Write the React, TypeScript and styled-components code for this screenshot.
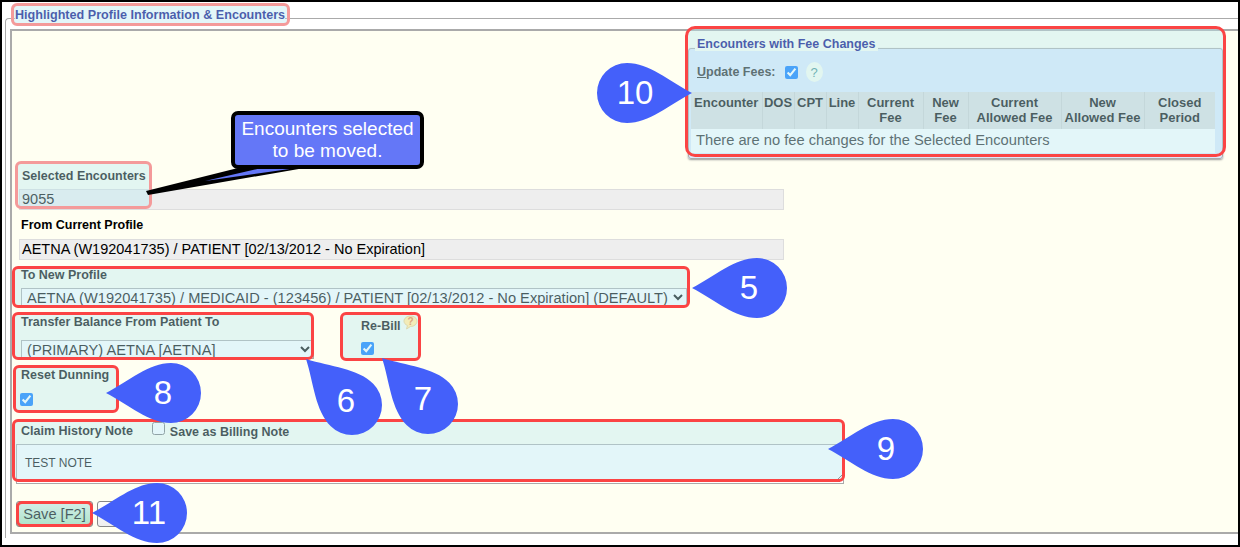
import styled, { createGlobalStyle } from "styled-components";

const GlobalStyle = createGlobalStyle`
  html, body {
    margin: 0;
    background: #fff;
    font-family: "Liberation Sans", Arial, sans-serif;
  }
`;

const Page = styled.div`
  position: relative;
  width: 1240px;
  height: 547px;
  overflow: hidden;
`;

const Frame = styled.div`
  box-sizing: border-box;
  width: 1240px;
  height: 547px;
  border: 2px solid #000;
  padding: 6px 0 0 3px;
`;

const Outer = styled.fieldset`
  box-sizing: border-box;
  height: 530px;
  min-width: 0;
  margin: 0;
  padding: 0 0 0 4px;
  border: solid #aaa;
  border-width: 1px 0 0 1px;
  border-top-left-radius: 4px;
`;

const OuterLegend = styled.legend`
  position: relative;
  margin-left: 5px;
  padding: 0 0 6px;
  font-size: 12.6px;
  font-weight: bold;
  line-height: 14px;
  color: #000080;
`;

const Panel = styled.div`
  box-sizing: border-box;
  height: 505px;
  margin-top: 1px;
  border: 2px solid #aaa;
  border-right: 0;
  background: #fffff2;
`;

const FeeRow = styled.div`
  display: flex;
  justify-content: flex-end;
  padding: 6px 15px 0 0;
`;

const FeeWrap = styled.div`
  position: relative;
  width: 535px;
`;

const FeeBox = styled.fieldset`
  box-sizing: border-box;
  min-width: 0;
  margin: 0;
  padding: 0 2px 5px;
  border: 1px solid #aaa;
  border-radius: 3px;
  background: #dee9fc;
  box-shadow: 0 1px 2px #999;
`;

const FeeLegend = styled.legend`
  margin-left: 4px;
  padding: 0 2px 8px;
  font-size: 12.5px;
  font-weight: bold;
  line-height: 14px;
  color: #000080;
  background: linear-gradient(#fffff2 65%, transparent 65%);
`;

const UpdateRow = styled.div`
  display: flex;
  align-items: center;
  height: 20px;
  margin: 3px 0 10px 6px;
  font-size: 12.5px;
  font-weight: bold;
  color: #222;
  u {
    text-decoration: underline;
  }
`;

const HelpDot = styled.span`
  display: flex;
  align-items: center;
  justify-content: center;
  width: 17px;
  height: 20px;
  margin-left: 8px;
  border-radius: 50%;
  background: #fdfff0;
  font-size: 13px;
  font-weight: normal;
  color: #3f8f8f;
`;

const FeeTable = styled.table`
  width: 524px;
  table-layout: fixed;
  border-collapse: collapse;
`;

const HeadCell = styled.th<{ $w: number }>`
  box-sizing: border-box;
  width: ${(p) => p.$w}px;
  height: 37px;
  padding: 3px 0 0;
  border-right: 1px solid #ccc;
  background: #ddd;
  font-size: 13px;
  line-height: 15px;
  color: #000;
  vertical-align: top;
  white-space: nowrap;
  &:last-child {
    border-right: 0;
  }
`;

const EmptyCell = styled.td`
  box-sizing: border-box;
  height: 24px;
  padding: 0 0 2px 5px;
  background: #fff;
  font-size: 14.7px;
  color: #222;
`;

const Form = styled.div`
  display: flex;
  flex-direction: column;
  padding-left: 7px;
`;

const Field = styled.div<{ $top: number; $left?: number }>`
  position: relative;
  margin-top: ${(p) => p.$top}px;
  margin-left: ${(p) => p.$left ?? 0}px;
`;

const Label = styled.label<{ $gap: number; $indent?: number }>`
  display: block;
  height: 14px;
  margin-bottom: ${(p) => p.$gap}px;
  padding-left: ${(p) => p.$indent ?? 2}px;
  font-size: 12.5px;
  font-weight: bold;
  line-height: 16px;
  color: #000;
  white-space: nowrap;
`;

const ReadBox = styled.div`
  box-sizing: border-box;
  width: 765px;
  height: 21px;
  padding-left: 2px;
  border: 1px solid #ddd;
  background: #eee;
  font-size: 14.5px;
  line-height: 19px;
  color: #000;
`;

const Select = styled.select<{ $w: number }>`
  display: block;
  box-sizing: border-box;
  width: ${(p) => p.$w}px;
  height: 19px;
  margin: 0 0 0 2px;
  padding: 0 0 0 1px;
  border: 1px solid #aaa;
  border-radius: 0;
  background: #fff;
  font-family: "Liberation Sans", Arial, sans-serif;
  font-size: 14.65px;
  color: #000;
`;

const Row = styled.div`
  display: flex;
  align-items: flex-start;
`;

const Check = styled.input<{ $left?: number }>`
  display: block;
  width: 13px;
  height: 13px;
  margin: 0 0 0 ${(p) => p.$left ?? 0}px;
`;

const BillingLabel = styled.span`
  display: inline-flex;
  margin-left: 19px;
  gap: 5px;
`;

const BillingCheck = styled(Check)`
  margin-top: -2px;
`;

const NoteArea = styled.textarea`
  display: block;
  box-sizing: border-box;
  width: 828px;
  height: 40px;
  margin-left: -3px;
  padding: 11px 8px 0;
  border: 1px solid #aaa;
  background: #fff;
  font-family: "Liberation Sans", Arial, sans-serif;
  font-size: 12px;
  color: #000;
  outline: none;
`;

const ButtonRow = styled(Field)`
  display: flex;
  gap: 4px;
  margin-left: -3px;
`;

const SaveButton = styled.button`
  box-sizing: border-box;
  width: 77px;
  height: 26px;
  padding: 0;
  border: 1px solid #888;
  border-radius: 3px;
  background: linear-gradient(#e6f2e6, #a6e0ae);
  font-family: "Liberation Sans", Arial, sans-serif;
  font-size: 14.6px;
  color: #000;
`;

const CancelButton = styled.button`
  box-sizing: border-box;
  width: 60px;
  height: 26px;
  border: 1px solid #888;
  border-radius: 3px;
  background: linear-gradient(#fff, #eee);
`;

// translucent highlight the screenshot author dropped over each field
const Mark = styled.div<{ $l: number; $t: number; $w: number; $h: number; $soft?: boolean; $r?: number }>`
  position: absolute;
  left: ${(p) => p.$l}px;
  top: ${(p) => p.$t}px;
  box-sizing: border-box;
  width: ${(p) => p.$w}px;
  height: ${(p) => p.$h}px;
  border: 3px solid ${(p) => (p.$soft ? "#f49a9a" : "#fb4444")};
  border-radius: ${(p) => p.$r ?? 6}px;
  background: rgba(185, 232, 240, 0.4);
  pointer-events: none;
`;

const Callout = styled.div`
  position: absolute;
  left: 231px;
  top: 111px;
  box-sizing: border-box;
  width: 193px;
  height: 58px;
  padding-top: 3px;
  border: 4px solid #000;
  border-radius: 7px;
  background: #6477f7;
  font-size: 19px;
  line-height: 22px;
  text-align: center;
  white-space: nowrap;
  color: #fff;
`;

const CalloutTail = styled.svg`
  position: absolute;
  left: 140px;
  top: 160px;
`;

const Pin = styled.div<{ $x: number; $y: number }>`
  position: absolute;
  left: ${(p) => p.$x - 70}px;
  top: ${(p) => p.$y - 70}px;
  width: 140px;
  height: 140px;
`;

const PinNumber = styled.span<{ $dx: number; $dy: number }>`
  position: absolute;
  inset: 0;
  display: flex;
  align-items: center;
  justify-content: center;
  transform: translate(${(p) => p.$dx}px, ${(p) => p.$dy}px);
  font-size: 33px;
  color: #fff;
`;

const BubbleIcon = styled.svg`
  position: absolute;
  left: 42px;
  top: -3px;
`;

function Teardrop({ x, y, angle, n, dx, dy }: { x: number; y: number; angle: number; n: number; dx: number; dy: number }) {
  return (
    <Pin $x={x} $y={y}>
      <svg width="140" height="140" viewBox="-70 -70 140 140">
        <path
          transform={`rotate(${angle})`}
          d="M-65 0C-42 -12 -22 -30 0 -30A30 30 0 0 1 0 30C-22 30 -42 12 -65 0Z"
          fill="#4460fa"
        />
      </svg>
      <PinNumber $dx={dx} $dy={dy}>
        {n}
      </PinNumber>
    </Pin>
  );
}

const heads: [string[], number][] = [
  [["Encounter"], 71],
  [["DOS"], 32],
  [["CPT"], 32],
  [["Line"], 32],
  [["Current", "Fee"], 65],
  [["New", "Fee"], 45],
  [["Current", "Allowed Fee"], 93],
  [["New", "Allowed Fee"], 83],
  [["Closed", "Period"], 71],
];

function App() {
  return (
    <Page>
      <GlobalStyle />
      <Frame>
        <Outer>
          <OuterLegend>
            Highlighted Profile Information &amp; Encounters
            <Mark $soft $l={-4} $t={-5} $w={279} $h={23} />
          </OuterLegend>
          <Panel>
            <FeeRow>
              <FeeWrap>
                <FeeBox>
                  <FeeLegend>Encounters with Fee Changes</FeeLegend>
                  <UpdateRow>
                    <span>
                      <u>U</u>pdate Fees:
                    </span>
                    <Check type="checkbox" defaultChecked $left={9} />
                    <HelpDot>?</HelpDot>
                  </UpdateRow>
                  <FeeTable>
                    <thead>
                      <tr>
                        {heads.map(([lines, w]) => (
                          <HeadCell key={lines.join(" ")} $w={w}>
                            {lines[0]}
                            {lines[1] && <br />}
                            {lines[1]}
                          </HeadCell>
                        ))}
                      </tr>
                    </thead>
                    <tbody>
                      <tr>
                        <EmptyCell colSpan={9}>There are no fee changes for the Selected Encounters</EmptyCell>
                      </tr>
                    </tbody>
                  </FeeTable>
                </FeeBox>
                <Mark $l={-3} $t={-11} $w={541} $h={131} $r={10} />
              </FeeWrap>
            </FeeRow>
            <Form>
              <Field $top={9}>
                <Label $gap={7} $indent={3}>
                  Selected Encounters
                </Label>
                <ReadBox>9055</ReadBox>
                <Mark $soft $l={-4} $t={-7} $w={137} $h={48} />
              </Field>
              <Field $top={7}>
                <Label $gap={8}>From Current Profile</Label>
                <ReadBox>AETNA (W192041735) / PATIENT [02/13/2012 - No Expiration]</ReadBox>
              </Field>
              <Field $top={7}>
                <Label $gap={7}>To New Profile</Label>
                <Select $w={666} defaultValue="a">
                  <option value="a">
                    AETNA (W192041735) / MEDICAID - (123456) / PATIENT [02/13/2012 - No Expiration] (DEFAULT)
                  </option>
                </Select>
                <Mark $l={-7} $t={-1} $w={678} $h={42} />
              </Field>
              <Row>
                <Field $top={7}>
                  <Label $gap={12}>Transfer Balance From Patient To</Label>
                  <Select $w={293} defaultValue="a">
                    <option value="a">(PRIMARY) AETNA [AETNA]</option>
                  </Select>
                  <Mark $l={-7} $t={-2} $w={302} $h={48} />
                </Field>
                <Field $top={11} $left={47}>
                  <Label $gap={10} $indent={0}>
                    Re-Bill
                  </Label>
                  <Check type="checkbox" defaultChecked />
                  <Mark $l={-21} $t={-6} $w={81} $h={49} />
                  <BubbleIcon width="15" height="15" viewBox="0 0 15 15">
                    <path
                      d="M7.5 1C11 1 14 3.2 14 6.2S11 11.5 7.5 11.5L3.5 14L4.5 10.6C2.4 9.6 1 8 1 6.2C1 3.2 4 1 7.5 1Z"
                      fill="#f3ecb8"
                      stroke="#dcdab0"
                    />
                    <text x="7.5" y="9.8" fontSize="10" fontWeight="bold" textAnchor="middle" fill="#dba67e">
                      ?
                    </text>
                  </BubbleIcon>
                </Field>
              </Row>
              <Field $top={8}>
                <Label $gap={12}>Reset Dunning</Label>
                <Check type="checkbox" defaultChecked $left={1} />
                <Mark $l={-6} $t={-2} $w={106} $h={48} />
              </Field>
              <Field $top={17}>
                <Label $gap={7}>
                  Claim History Note
                  <BillingLabel>
                    <BillingCheck type="checkbox" />
                    Save as Billing Note
                  </BillingLabel>
                </Label>
                <NoteArea readOnly value="TEST NOTE" />
                <Mark $l={-7} $t={-4} $w={833} $h={63} />
              </Field>
              <ButtonRow $top={17}>
                <SaveButton>Save [F2]</SaveButton>
                <CancelButton />
                <Mark $l={0} $t={0} $w={77} $h={26} />
              </ButtonRow>
            </Form>
          </Panel>
        </Outer>
      </Frame>
      <CalloutTail width="190" height="40" viewBox="140 160 190 40">
        <path d="M146 191L238 168L316 166L148 195Z" fill="#000" />
        <path d="M205 181L262 168L304 167Z" fill="#6477f7" />
      </CalloutTail>
      <Callout>
        Encounters selected
        <br />
        to be moved.
      </Callout>
      <Teardrop x={757} y={288} angle={0} n={5} dx={-8} dy={0} />
      <Teardrop x={352} y={405} angle={45} n={6} dx={-6} dy={-4} />
      <Teardrop x={428} y={404} angle={45} n={7} dx={-5} dy={-5} />
      <Teardrop x={171} y={393} angle={0} n={8} dx={-8} dy={0} />
      <Teardrop x={893} y={449} angle={0} n={9} dx={-7} dy={0} />
      <Teardrop x={627} y={93} angle={180} n={10} dx={8} dy={0} />
      <Teardrop x={157} y={513} angle={0} n={11} dx={-8} dy={0} />
    </Page>
  );
}

export default App;
